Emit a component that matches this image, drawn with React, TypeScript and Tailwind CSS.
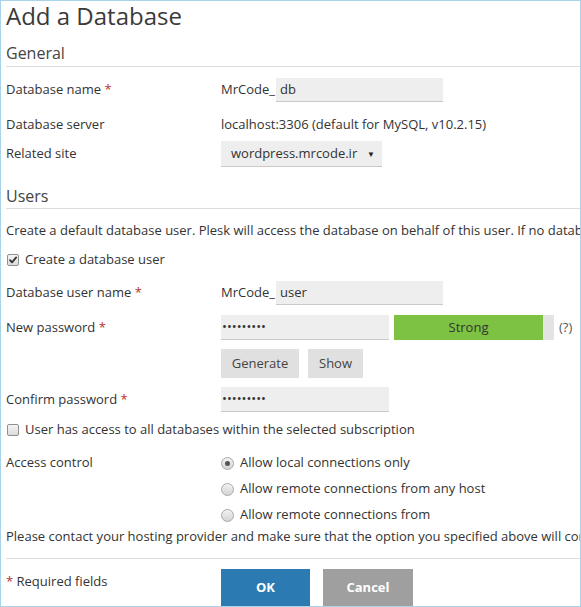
import React from "react";

function Req() {
  return <span className="text-[#b8312f]"> *</span>;
}

function CheckBox({ checked }: { checked?: boolean }) {
  return (
    <span className="relative inline-flex w-[12px] h-[12px] border border-[#8e8f8f] rounded-[2px] bg-gradient-to-b from-[#f4f4f4] to-[#dcdcdc] items-center justify-center shrink-0">
      {checked && (
        <svg width="10" height="10" viewBox="0 0 10 10" className="absolute left-[0px] top-[0px]">
          <path d="M2 5.2 L4 7.4 L8.2 2.4" fill="none" stroke="#333" strokeWidth="1.8" strokeLinecap="round" strokeLinejoin="round" />
        </svg>
      )}
    </span>
  );
}

function Radio({ checked }: { checked?: boolean }) {
  return (
    <span className="inline-flex w-[13px] h-[13px] rounded-full border border-[#a9a9a9] bg-gradient-to-b from-[#f2f2f2] to-[#d4d4d4] items-center justify-center shrink-0">
      {checked && <span className="w-[5px] h-[5px] rounded-full bg-[#555]" />}
    </span>
  );
}

function Label({ children }: { children: React.ReactNode }) {
  return <div className="w-[215px] shrink-0">{children}</div>;
}

export default function App() {
  return (
    <div
      className="w-[581px] h-[607px] border border-[#a9d3e8] bg-white overflow-hidden text-[13px] text-[#333] relative"
      style={{ fontFamily: '"Open Sans", sans-serif' }}
    >
      <div className="pl-[5px]">
        <div className="h-[30px] leading-[30px] text-[24px] text-[#3a3a3a] whitespace-nowrap">Add a Database</div>

        <div className="pt-[10px] pb-[1px] leading-[24px] text-[16px] text-[#444] border-b border-[#dcdcdc]">General</div>

        <div className="mt-[11px] h-[24px] flex items-center">
          <Label>
            Database name<Req />
          </Label>
          <span>MrCode_</span>
          <div className="ml-[1px] w-[167px] h-[24px] bg-[#eeeeee] border-b border-[#c9c9c9] pl-[4px] flex items-center">db</div>
        </div>

        <div className="mt-[11px] h-[24px] flex items-center">
          <Label>Database server</Label>
          <span className="whitespace-nowrap">localhost:3306 (default for MySQL, v10.2.15)</span>
        </div>

        <div className="mt-[4px] h-[26px] flex items-center">
          <Label>Related site</Label>
          <div className="w-[161px] h-[26px] bg-[#eeeeee] border-b border-[#c9c9c9] pl-[10px] pr-[7px] flex items-center justify-between">
            <span>wordpress.mrcode.ir</span>
            <span className="text-[8px] text-[#222]">▼</span>
          </div>
        </div>

        <div className="mt-[17px] leading-[24px] text-[16px] text-[#444] border-b border-[#dcdcdc]">Users</div>

        <div className="mt-[12px] h-[20px] flex items-center whitespace-nowrap">
          Create a default database user. Plesk will access the database on behalf of this user. If no database user is specified
        </div>

        <div className="mt-[9px] h-[20px] flex items-center gap-[6px] pl-[1px]">
          <CheckBox checked />
          <span>Create a database user</span>
        </div>

        <div className="mt-[11px] h-[24px] flex items-center">
          <Label>
            Database user name<Req />
          </Label>
          <span>MrCode_</span>
          <div className="ml-[1px] w-[167px] h-[24px] bg-[#eeeeee] border-b border-[#c9c9c9] pl-[4px] flex items-center">user</div>
        </div>

        <div className="mt-[10px] h-[25px] flex items-center">
          <Label>
            New password<Req />
          </Label>
          <div className="w-[168px] h-[25px] bg-[#eeeeee] border-b border-[#c9c9c9] pl-[1px] flex items-center text-[13px]">•••••••••</div>
          <div className="ml-[5px] w-[160px] h-[25px] bg-[#e3e3e3] flex">
            <div className="w-[149px] h-full bg-[#7dc242] flex items-center justify-center text-[#333]">Strong</div>
          </div>
          <span className="ml-[5px] text-[#555]">(?)</span>
        </div>

        <div className="mt-[9px] h-[29px] flex items-center">
          <div className="w-[215px] shrink-0" />
          <div className="w-[78px] h-[29px] bg-[#e0e0e0] flex items-center justify-center text-[#444]">Generate</div>
          <div className="ml-[9px] w-[55px] h-[29px] bg-[#e0e0e0] flex items-center justify-center text-[#444]">Show</div>
        </div>

        <div className="mt-[9px] h-[25px] flex items-center">
          <Label>
            Confirm password<Req />
          </Label>
          <div className="w-[168px] h-[25px] bg-[#eeeeee] border-b border-[#c9c9c9] pl-[1px] flex items-center text-[13px]">•••••••••</div>
        </div>

        <div className="mt-[8px] h-[20px] flex items-center gap-[6px] pl-[1px]">
          <CheckBox />
          <span>User has access to all databases within the selected subscription</span>
        </div>

        <div className="mt-[13px] h-[20px] flex items-center">
          <Label>Access control</Label>
          <div className="flex items-center gap-[6px]">
            <Radio checked />
            <span>Allow local connections only</span>
          </div>
        </div>
        <div className="mt-[6px] h-[20px] flex items-center">
          <div className="w-[215px] shrink-0" />
          <div className="flex items-center gap-[6px]">
            <Radio />
            <span>Allow remote connections from any host</span>
          </div>
        </div>
        <div className="mt-[6px] h-[20px] flex items-center">
          <div className="w-[215px] shrink-0" />
          <div className="flex items-center gap-[6px]">
            <Radio />
            <span>Allow remote connections from</span>
          </div>
        </div>

        <div className="mt-[2px] h-[20px] flex items-center whitespace-nowrap">
          Please contact your hosting provider and make sure that the option you specified above will comply with the server settings.
        </div>

        <div className="mt-[11px] border-t border-[#dcdcdc]" />

        <div className="mt-[10px] flex items-start">
          <div className="w-[215px] shrink-0 leading-[24px]">
            <span className="text-[#b8312f]">*</span> Required fields
          </div>
          <div className="w-[89px] h-[38px] bg-[#2b7bb2] text-white font-bold flex items-center justify-center">OK</div>
          <div className="ml-[13px] w-[90px] h-[38px] bg-[#9f9f9f] text-white font-bold flex items-center justify-center">Cancel</div>
        </div>
      </div>
    </div>
  );
}
